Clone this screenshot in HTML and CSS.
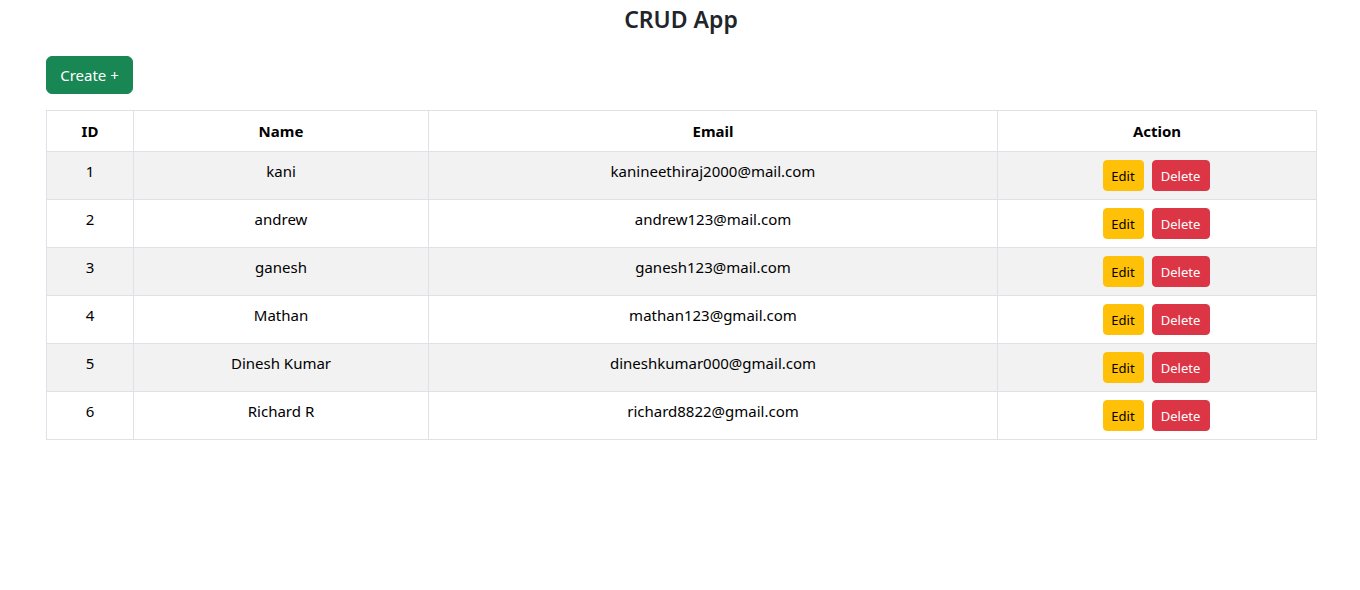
FILE: index.html
```html
<!DOCTYPE html>
<html lang="en">
<head>
<meta charset="utf-8">
<title>CRUD App</title>
<link rel="stylesheet" href="styles.css">
</head>
<body>
<div class="page">
  <h1 class="title">CRUD App</h1>
  <div class="toolbar">
    <button class="btn btn-create">Create +</button>
  </div>
  <table class="table">
    <colgroup>
      <col class="c-id"><col class="c-name"><col class="c-email"><col class="c-action">
    </colgroup>
    <thead>
      <tr><th>ID</th><th>Name</th><th>Email</th><th>Action</th></tr>
    </thead>
    <tbody>
      <tr><td>1</td><td>kani</td><td>kanineethiraj2000@mail.com</td><td><div class="actions"><button class="btn-sm btn-edit">Edit</button><button class="btn-sm btn-delete">Delete</button></div></td></tr>
      <tr><td>2</td><td>andrew</td><td>andrew123@mail.com</td><td><div class="actions"><button class="btn-sm btn-edit">Edit</button><button class="btn-sm btn-delete">Delete</button></div></td></tr>
      <tr><td>3</td><td>ganesh</td><td>ganesh123@mail.com</td><td><div class="actions"><button class="btn-sm btn-edit">Edit</button><button class="btn-sm btn-delete">Delete</button></div></td></tr>
      <tr><td>4</td><td>Mathan</td><td>mathan123@gmail.com</td><td><div class="actions"><button class="btn-sm btn-edit">Edit</button><button class="btn-sm btn-delete">Delete</button></div></td></tr>
      <tr><td>5</td><td>Dinesh Kumar</td><td>dineshkumar000@gmail.com</td><td><div class="actions"><button class="btn-sm btn-edit">Edit</button><button class="btn-sm btn-delete">Delete</button></div></td></tr>
      <tr><td>6</td><td>Richard R</td><td>richard8822@gmail.com</td><td><div class="actions"><button class="btn-sm btn-edit">Edit</button><button class="btn-sm btn-delete">Delete</button></div></td></tr>
    </tbody>
  </table>
</div>
</body>
</html>
```
FILE: styles.css
```css
* { box-sizing: border-box; }
html, body { margin: 0; padding: 0; background: #fff; }
body {
  font-family: "Noto Sans", "Open Sans", sans-serif;
  font-size: 16px;
  line-height: 24px;
  color: #212529;
}
.page {
  padding: 0 44px 0 46px;
}
.title {
  margin: 0;
  padding-top: 4px;
  height: 42px;
  font-size: 23px;
  line-height: 30px;
  font-weight: 600;
  text-align: center;
  color: #212529;
}
.toolbar {
  display: flex;
  margin-top: 14px;
  margin-bottom: 16px;
}
.btn {
  font-family: inherit;
  font-size: 15px;
  line-height: 24px;
  border: 1px solid transparent;
  border-radius: 6px;
  cursor: pointer;
}
.btn-create {
  background: #198754;
  border-color: #198754;
  color: #fff;
  width: 87px;
  height: 38px;
  padding: 0;
}
.table {
  width: 1270px;
  border-collapse: collapse;
  table-layout: fixed;
  border: 1px solid #dee2e6;
}
.c-id { width: 87px; }
.c-name { width: 295px; }
.c-email { width: 569px; }
.c-action { width: 319px; }
.table th, .table td {
  border: 1px solid #dee2e6;
  text-align: center;
  padding: 8px;
  vertical-align: top;
  font-size: 15px;
  color: #000;
}
.table th {
  font-weight: 700;
  height: 41px;
  padding-top: 8px;
  padding-bottom: 7px;
}
.table td { height: 48px; padding-top: 7px; }
.table tbody tr:nth-child(odd) td { background: #f2f2f2; }
.actions {
  display: flex;
  justify-content: center;
  gap: 8px;
  padding-top: 1px;
  padding-right: 2px;
}
.btn-sm {
  font-family: inherit;
  font-size: 13px;
  line-height: 20px;
  height: 31px;
  border-radius: 4px;
  border: 1px solid transparent;
  cursor: pointer;
}
.btn-edit { background: #ffc107; border-color: #ffc107; color: #000; width: 41px; padding: 4px 0; }
.btn-delete { background: #dc3545; border-color: #dc3545; color: #fff; width: 58px; padding: 4px 0; }
```
